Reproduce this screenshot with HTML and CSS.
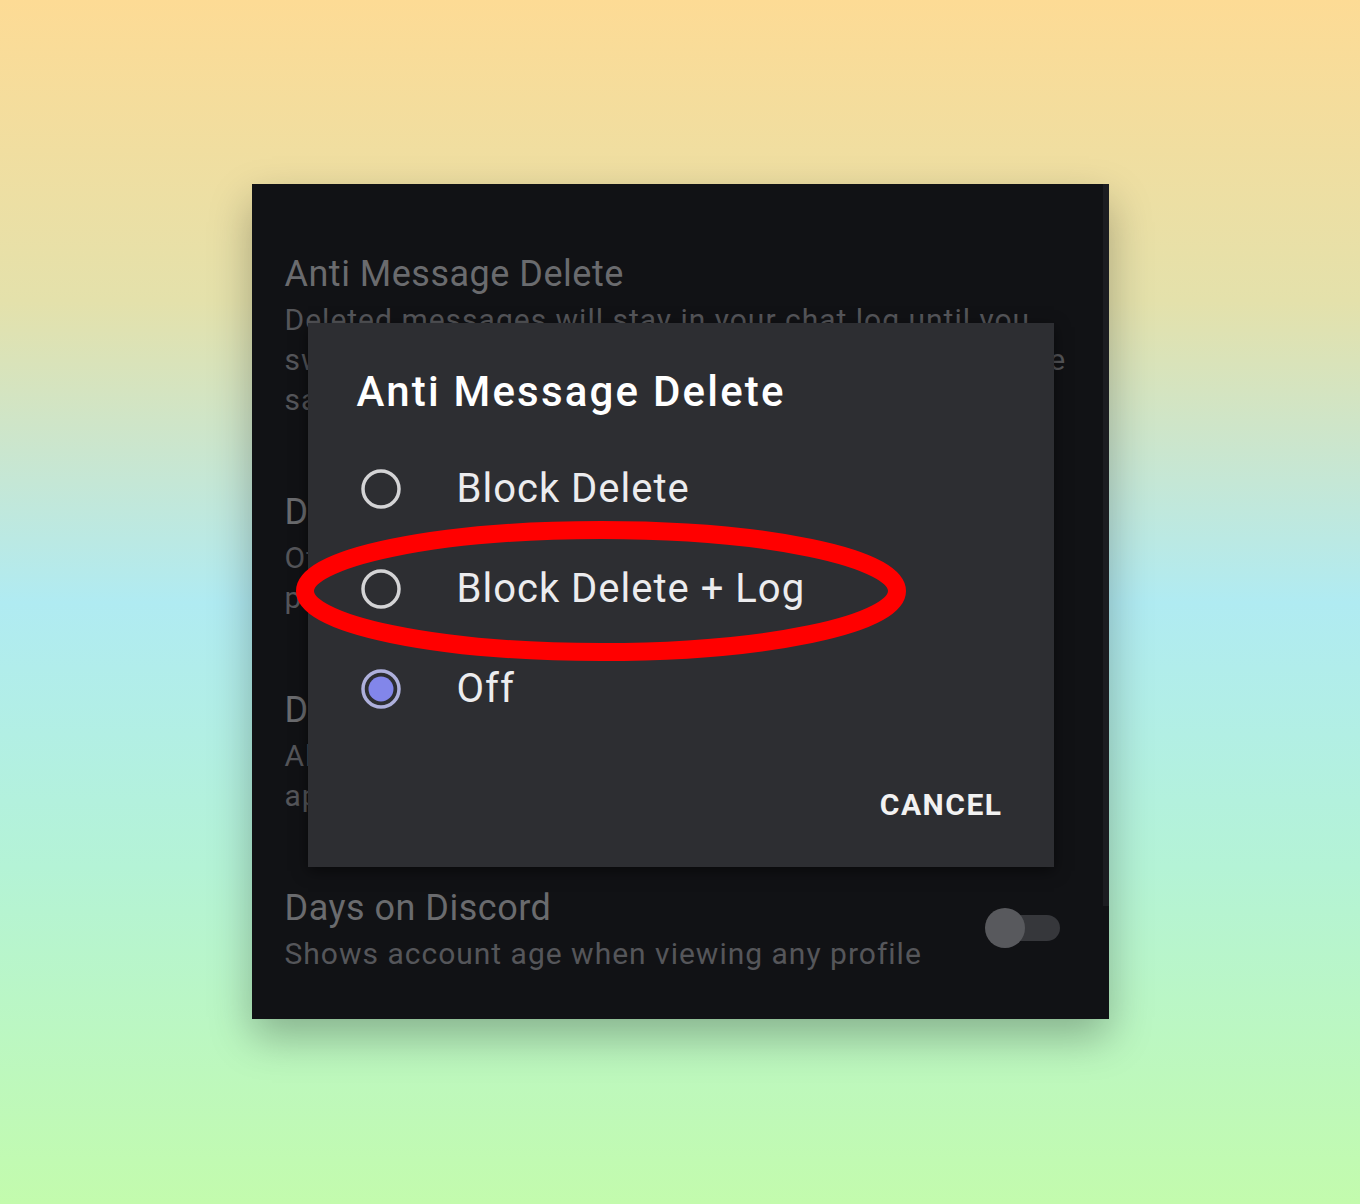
FILE: index.html
```html
<!DOCTYPE html>
<html lang="en">
<head>
  <meta charset="UTF-8">
  <meta name="viewport" content="width=device-width, initial-scale=1.0">
  <title>Anti Message Delete</title>
  <link rel="stylesheet" href="styles.css">
</head>
<body>
  <div class="shot">
    <div class="settings">
      <div class="setting">
        <h3>Anti Message Delete</h3>
        <p>Deleted messages will stay in your chat log until you<br>switch channels or restart the app. Edits will always be<br>saved in the log.</p>
      </div>
      <div class="setting">
        <h3>Disable Typing Indicator</h3>
        <p>Other users won't see when you are typing in<br>private or group chats.</p>
      </div>
      <div class="setting">
        <h3>Delete Message Logs</h3>
        <p>All logged messages are cleared when you<br>app restarts.</p>
      </div>
      <div class="setting setting-toggle">
        <div class="setting-text">
          <h3>Days on Discord</h3>
          <p>Shows account age when viewing any profile</p>
        </div>
        <span class="toggle"><span class="knob"></span></span>
      </div>
    </div>
    <div class="scrollbar"></div>

    <div class="dialog">
      <h2>Anti Message Delete</h2>
      <div class="option">
        <svg class="radio" width="48" height="48" viewBox="0 0 48 48"><circle cx="24" cy="24" r="18" fill="none" stroke="#d4d4d6" stroke-width="3.5"/></svg>
        <span>Block Delete</span>
      </div>
      <div class="option">
        <svg class="radio" width="48" height="48" viewBox="0 0 48 48"><circle cx="24" cy="24" r="18" fill="none" stroke="#d4d4d6" stroke-width="3.5"/></svg>
        <span>Block Delete + Log</span>
      </div>
      <div class="option">
        <svg class="radio" width="48" height="48" viewBox="0 0 48 48"><circle cx="24" cy="24" r="18" fill="none" stroke="#aeb0dc" stroke-width="3.5"/><circle cx="24" cy="24" r="12.5" fill="#8286ea"/></svg>
        <span>Off</span>
      </div>
      <div class="dialog-actions">
        <a class="btn-cancel" href="#">CANCEL</a>
      </div>
    </div>

    <!-- red marker around the option -->
    <svg class="mark" width="614" height="144" viewBox="0 0 614 144">
      <ellipse cx="307" cy="72" rx="296" ry="61" fill="none" stroke="#ff0000" stroke-width="18"/>
    </svg>
  </div>
</body>
</html>
```

FILE: styles.css
```css
body {
  margin: 0;
  min-height: 100vh;
  display: flex;
  align-items: center;
  justify-content: center;
  font-family: Roboto, "Liberation Sans", sans-serif;
  background: linear-gradient(180deg, #fddb95 0%, #e4e1ab 25%, #b0ebf2 50%, #b4f3d6 72%, #c3fbad 100%);
}
.shot {
  position: relative;
  width: 857px;
  height: 835px;
  box-sizing: border-box;
  margin-top: -2px;
  padding: 70px 49px 0 33px;
  background: #111215;
  box-shadow: 0 18px 40px rgba(0,0,0,0.28);
  overflow: hidden;
}
.settings h3 {
  margin: 0;
  font-size: 36px;
  font-weight: 400;
  line-height: 40px;
  letter-spacing: 0.5px;
  color: #6a6b6e;
}
.settings p {
  margin: 6px 0 0;
  font-size: 30px;
  line-height: 40px;
  letter-spacing: 1px;
  white-space: nowrap;
  color: #55565a;
}
.setting {
  margin-bottom: 72px;
}
.setting-toggle {
  display: flex;
  align-items: center;
  justify-content: space-between;
}
.toggle {
  position: relative;
  width: 76px;
  height: 40px;
  margin-top: -6px;
}
.toggle::before {
  content: '';
  position: absolute;
  right: 0;
  top: 7px;
  width: 56px;
  height: 26px;
  border-radius: 13px;
  background: #36373b;
}
.knob {
  position: absolute;
  left: 1px;
  top: 0;
  width: 40px;
  height: 40px;
  border-radius: 50%;
  background: #58595d;
}
.scrollbar {
  position: absolute;
  right: 0;
  top: 0;
  width: 6px;
  height: 722px;
  background: #1c1d21;
}
.dialog {
  position: absolute;
  left: 56px;
  top: 139px;
  width: 746px;
  height: 544px;
  box-sizing: border-box;
  padding: 45px 51px 0 49px;
  background: #2d2e32;
  box-shadow: 0 4px 14px rgba(0,0,0,0.5);
}
.dialog h2 {
  margin: 0 0 23px;
  font-size: 42px;
  font-weight: 500;
  line-height: 48px;
  letter-spacing: 2.2px;
  color: #ffffff;
}
.option {
  display: flex;
  align-items: center;
  height: 100px;
  font-size: 40px;
  letter-spacing: 1px;
  color: #ececee;
}
.radio {
  flex-shrink: 0;
  margin-right: 52px;
}
.dialog-actions {
  display: flex;
  justify-content: flex-end;
  margin-top: 46px;
}
.btn-cancel {
  font-size: 30px;
  font-weight: 700;
  line-height: 40px;
  letter-spacing: 1.5px;
  color: #f2f2f2;
  text-decoration: none;
}
.mark {
  position: absolute;
  left: 42px;
  top: 335px;
}
```
